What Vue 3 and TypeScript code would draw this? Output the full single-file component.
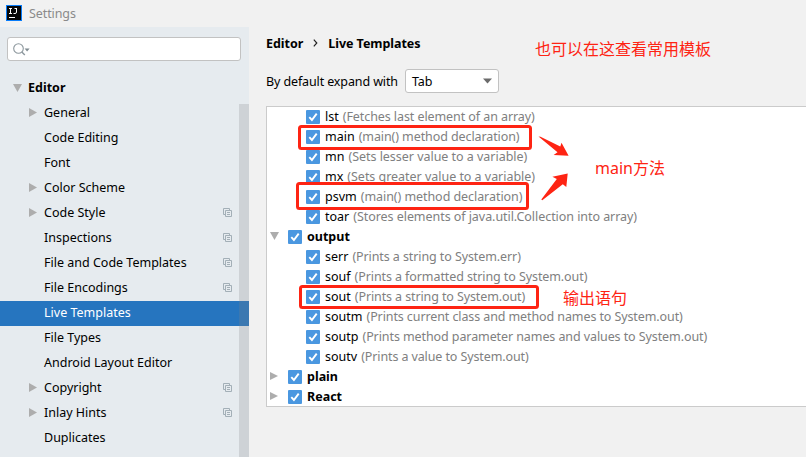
<script setup lang="ts">
interface NavItem {
  label: string
  arrow?: boolean
  copy?: boolean
  selected?: boolean
}
interface Template {
  name: string
  desc?: string
  tracking?: number
  group?: boolean
  open?: boolean
}

const navItems: NavItem[] = [
  { label: 'General', arrow: true },
  { label: 'Code Editing' },
  { label: 'Font' },
  { label: 'Color Scheme', arrow: true },
  { label: 'Code Style', arrow: true, copy: true },
  { label: 'Inspections', copy: true },
  { label: 'File and Code Templates', copy: true },
  { label: 'File Encodings', copy: true },
  { label: 'Live Templates', selected: true },
  { label: 'File Types' },
  { label: 'Android Layout Editor' },
  { label: 'Copyright', arrow: true, copy: true },
  { label: 'Inlay Hints', arrow: true, copy: true },
  { label: 'Duplicates' },
]

const templates: Template[] = [
  { name: 'lst', desc: '(Fetches last element of an array)', tracking: -0.08 },
  { name: 'main', desc: '(main() method declaration)', tracking: -0.09 },
  { name: 'mn', desc: '(Sets lesser value to a variable)', tracking: -0.03 },
  { name: 'mx', desc: '(Sets greater value to a variable)', tracking: -0.03 },
  { name: 'psvm', desc: '(main() method declaration)', tracking: -0.06 },
  { name: 'toar', desc: '(Stores elements of java.util.Collection into array)', tracking: -0.055 },
  { name: 'output', group: true, open: true },
  { name: 'serr', desc: '(Prints a string to System.err)', tracking: -0.09 },
  { name: 'souf', desc: '(Prints a formatted string to System.out)', tracking: -0.09 },
  { name: 'sout', desc: '(Prints a string to System.out)', tracking: -0.11 },
  { name: 'soutm', desc: '(Prints current class and method names to System.out)', tracking: -0.1 },
  { name: 'soutp', desc: '(Prints method parameter names and values to System.out)', tracking: -0.09 },
  { name: 'soutv', desc: '(Prints a value to System.out)', tracking: -0.11 },
  { name: 'plain', group: true },
  { name: 'React', group: true },
]
</script>

<template>
  <div class="window">
    <header class="titlebar">
      <svg class="logo" width="16" height="16" viewBox="0 0 16 16">
        <rect width="16" height="16" fill="#087cfa" />
        <rect x="1" y="1" width="14" height="14" fill="#070707" />
        <path d="M3 3.5h3M4.5 3.5v5M3 8.5h3M10.5 3v4q0 1.5-1.5 1.5H7.5M8.5 3.5h2" fill="none" stroke="#fff" />
        <rect x="3" y="12" width="6" height="1" fill="#fff" />
      </svg>
      <span>Settings</span>
    </header>

    <div class="body">
      <aside class="sidebar">
        <div class="search">
          <svg width="17" height="13" viewBox="0 0 17 13">
            <circle cx="5.5" cy="5.5" r="4.8" fill="none" stroke="#8c979d" stroke-width="1.1" />
            <path d="M8.8 8.9l3 3" stroke="#8c979d" stroke-width="1.4" />
            <path d="M11.6 5.4h5l-2.5 3z" fill="#7f8b91" />
          </svg>
        </div>
        <nav class="tree">
          <div class="nav root">
            <svg width="9" height="8"><path d="M0 0h9L4.5 8z" fill="#adadad" /></svg>
            <span>Editor</span>
          </div>
          <div v-for="item in navItems" :key="item.label" class="nav" :class="{ selected: item.selected }">
            <span class="slot">
              <svg v-if="item.arrow" width="8" height="9"><path d="M0 0v9l8-4.5z" fill="#adadad" /></svg>
            </span>
            <span>{{ item.label }}</span>
            <svg v-if="item.copy" class="copy" width="9" height="9" viewBox="0 0 9 9">
              <path d="M2 6.5H.5v-6h6V2M2.5 2.5h6v6h-6zM4 4.5h3M4 6.5h3" fill="none" stroke="#a3afb7" />
            </svg>
          </div>
        </nav>
        <div class="scrollbar"></div>
      </aside>

      <main class="content">
        <div class="crumbs">
          <span>Editor</span>
          <svg width="5" height="8" viewBox="0 0 5 8"><path d="M.8.6L3.8 4 .8 7.4" fill="none" stroke="#222" stroke-width="1.2" /></svg>
          <span>Live Templates</span>
        </div>
        <div class="expand">
          <span>By default expand with</span>
          <div class="select">
            <span>Tab</span>
            <svg width="9" height="6"><path d="M0 .5h9L4.5 5.5z" fill="#6b6b6b" /></svg>
          </div>
        </div>
        <div class="list">
          <div v-for="t in templates" :key="t.name" class="row" :class="{ group: t.group }">
            <span v-if="t.group" class="handle">
              <svg v-if="t.open" width="9" height="8"><path d="M0 0h9L4.5 8z" fill="#adadad" /></svg>
              <svg v-else width="8" height="8"><path d="M0 0v8l8-4z" fill="#adadad" /></svg>
            </span>
            <svg width="14" height="14" viewBox="0 0 14 14">
              <rect width="14" height="14" rx="1" fill="#4a97e0" />
              <path d="M3.3 7.2l2.6 2.8 4.8-6.4" fill="none" stroke="#fff" stroke-width="1.9" />
            </svg>
            <span class="name">{{ t.name }}</span>
            <span v-if="t.desc" class="desc" :style="{ letterSpacing: t.tracking + 'px' }">{{ t.desc }}</span>
          </div>
        </div>
      </main>
    </div>

    <svg class="marks" width="806" height="457" viewBox="0 0 806 457">
      <g fill="none" stroke="#fe2413" stroke-width="3">
        <rect x="299.5" y="126.5" width="231" height="22" rx="2" />
        <rect x="297.5" y="183.5" width="230" height="25" rx="2" />
        <rect x="300.5" y="286.5" width="237" height="21" rx="2" />
      </g>
      <g fill="#fe2413">
        <path d="M538.5 136.5L540.5 136.8 560.3 146.5 561.5 142.8 568.6 155.7 553.6 155 557.5 152.3z" />
        <path d="M541.3 199.5L556.8 179 552.4 176.8 567.7 173.5 566.3 187 562.8 184.3 542.3 200.3z" />
      </g>
    </svg>
    <span class="note top">也可以在这查看常用模板</span>
    <span class="note method">main方法</span>
    <span class="note out">输出语句</span>
  </div>
</template>

<style>
body {
  margin: 0;
  overflow: hidden;
}
</style>

<style scoped>
.window {
  position: relative;
  display: flex;
  flex-direction: column;
  width: 806px;
  height: 457px;
  overflow: hidden;
  background: #f1f1f1;
  color: #000;
  font: 12.5px "Noto Sans", "Noto Sans CJK SC", sans-serif;
  white-space: nowrap;
}
svg {
  display: block;
  flex: none;
}
.titlebar {
  display: flex;
  align-items: center;
  gap: 7px;
  box-sizing: border-box;
  height: 27px;
  padding: 0 0 1px 6px;
  color: #8a8a8a;
  letter-spacing: -0.1px;
}
.body {
  display: flex;
  flex: 1;
  min-height: 0;
}
.sidebar {
  position: relative;
  width: 249px;
  overflow: hidden;
  background: #e6ebef;
}
.search {
  display: flex;
  align-items: center;
  box-sizing: border-box;
  width: 234px;
  height: 24px;
  margin: 10px 0 15px 7px;
  padding-left: 5px;
  border: 1px solid #c2c2c2;
  border-radius: 3px;
  background: #fff;
}
.nav {
  display: flex;
  align-items: center;
  box-sizing: border-box;
  height: 25px;
  padding: 0 0 2px 29px;
}
.root {
  gap: 6px;
  padding-left: 13px;
  font-weight: 700;
}
.slot {
  width: 15px;
}
.selected {
  background: #2675bf;
  color: #fff;
}
.copy {
  margin: 0 17px 0 auto;
}
.scrollbar {
  position: absolute;
  top: 77px;
  right: 0;
  bottom: 0;
  width: 10px;
  background: rgba(128, 128, 132, 0.24);
}
.content {
  flex: 1;
  min-width: 0;
  padding-left: 17px;
}
.crumbs {
  display: flex;
  align-items: center;
  gap: 10px;
  box-sizing: border-box;
  height: 34px;
  padding-bottom: 2px;
  font-weight: 700;
  letter-spacing: -0.04px;
}
.expand {
  display: flex;
  align-items: center;
  gap: 7px;
  height: 40px;
  letter-spacing: -0.12px;
}
.select {
  display: flex;
  align-items: center;
  justify-content: space-between;
  box-sizing: border-box;
  width: 94px;
  height: 24px;
  padding: 0 6px;
  border: 1px solid #c2c2c2;
  border-radius: 3px;
  background: #fff;
}
.list {
  box-sizing: border-box;
  height: 301px;
  margin-top: 5px;
  overflow: hidden;
  border: 1px solid #cbcbcb;
  border-right: 0;
  background: #fff;
}
.row {
  display: flex;
  align-items: center;
  height: 20px;
  padding-left: 39px;
}
.group {
  padding-left: 3px;
  font-weight: 700;
}
.handle {
  width: 18px;
  padding-bottom: 2px;
}
.name {
  margin: 0 4px 0 5px;
  padding-bottom: 2px;
}
.desc {
  padding-bottom: 2px;
  color: #808080;
}
.marks {
  position: absolute;
  top: 0;
  left: 0;
}
.note {
  position: absolute;
  color: #fe2413;
  font: 16px/20px "Noto Sans", "Noto Sans CJK SC", sans-serif;
}
.top {
  top: 39px;
  left: 535px;
}
.method {
  top: 158px;
  left: 595px;
}
.out {
  top: 288px;
  left: 563px;
}
</style>
